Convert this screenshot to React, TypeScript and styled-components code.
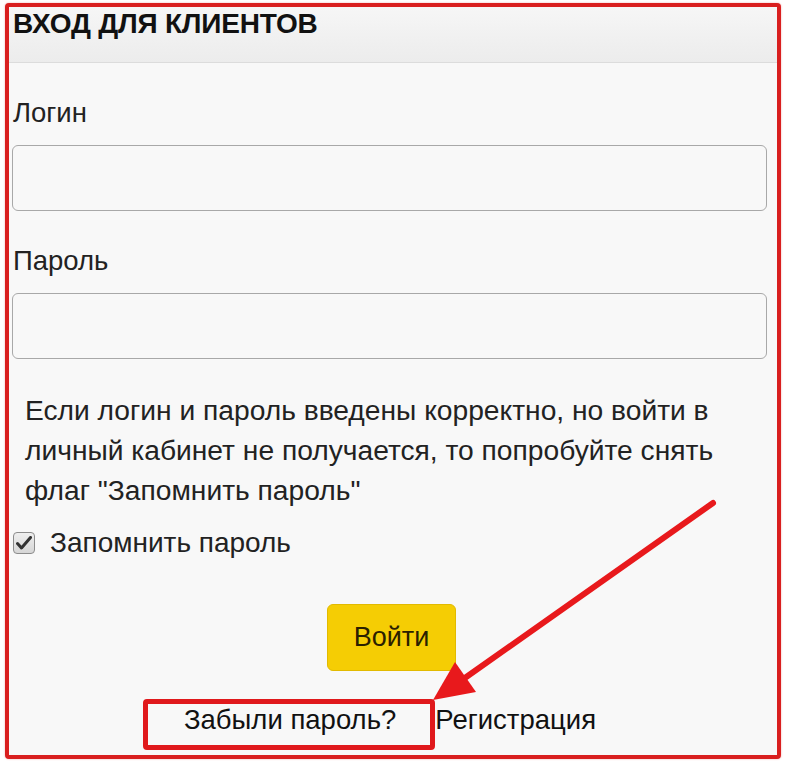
import React from "react";
import styled, { createGlobalStyle } from "styled-components";

const GlobalStyle = createGlobalStyle`
  html, body {
    margin: 0;
    padding: 0;
    background: #ffffff;
  }
  body {
    font-family: "Liberation Sans", Arial, sans-serif;
    color: #222;
  }
  * { box-sizing: border-box; }
`;

const Page = styled.div`
  position: relative;
  width: 786px;
  height: 764px;
  padding: 3px 0 0 5px;
`;

const Frame = styled.div`
  width: 776px;
  height: 756px;
  border: 4px solid #d91f1f;
  border-radius: 4px;
  background: #f8f8f8;
  box-shadow: 0 0 2px rgba(217, 31, 31, 0.4);
  overflow: hidden;
`;

const Header = styled.div`
  height: 56px;
  padding: 1px 0 0 4px;
  background: linear-gradient(#f6f6f6, #ececec);
  border-bottom: 1px solid #dcdcdc;
`;

const Title = styled.h2`
  margin: 0;
  font-size: 28px;
  line-height: 31px;
  font-weight: 700;
  color: #111;
  letter-spacing: -0.2px;
`;

const Body = styled.div`
  display: flex;
  flex-direction: column;
  padding: 0 10px 0 3px;
`;

const Label = styled.label`
  display: block;
  margin-top: 35px;
  padding-left: 1px;
  font-size: 27.5px;
  line-height: 30px;
  color: #222;
`;

const Input = styled.input`
  display: block;
  width: 100%;
  height: 66px;
  margin-top: 17px;
  border: 1px solid #a8a8a8;
  border-radius: 6px;
  background: #f8f8f8;
  font-family: inherit;
  font-size: 24px;
  padding: 0 12px;
  outline: none;
`;

const Note = styled.p`
  margin: 31px 0 0 0;
  padding-left: 13px;
  font-size: 28.2px;
  line-height: 40px;
  color: #222;
`;

const CheckRow = styled.div`
  display: flex;
  align-items: center;
  gap: 15px;
  margin-top: 18px;
  height: 30px;
  padding-left: 1px;
  font-size: 28px;
  line-height: 30px;
  color: #222;
`;

const Box = styled.span`
  display: inline-flex;
  align-items: center;
  justify-content: center;
  width: 22px;
  height: 22px;
  border: 1px solid #8c8c8c;
  border-radius: 4px;
  background: linear-gradient(#efefef, #d6d6d6);
`;

const ButtonRow = styled.div`
  display: flex;
  justify-content: center;
  margin-top: 46px;
  padding-left: 4px;
`;

const Button = styled.button`
  width: 129px;
  height: 67px;
  border: 1px solid #e2ba00;
  border-radius: 6px;
  background: #f5cd04;
  font-family: inherit;
  font-size: 27px;
  color: #2a2000;
  cursor: pointer;
`;

const Links = styled.div`
  display: flex;
  justify-content: center;
  gap: 39px;
  margin-top: 34px;
  padding-left: 1px;
  font-size: 27.5px;
  line-height: 30px;
`;

const Link = styled.a<{ $marked?: boolean }>`
  position: relative;
  color: #111;
  text-decoration: none;
  ${(p) =>
    p.$marked &&
    `
    &::before {
      content: "";
      position: absolute;
      left: -41px;
      right: -39px;
      top: -6px;
      bottom: -15px;
      border: 5px solid #e0191c;
      border-radius: 4px;
    }
  `}
`;

const Arrow = styled.svg`
  position: absolute;
  left: 0;
  top: 0;
  pointer-events: none;
`;

export default function App() {
  return (
    <>
      <GlobalStyle />
      <Page>
        <Frame>
          <Header>
            <Title>ВХОД ДЛЯ КЛИЕНТОВ</Title>
          </Header>
          <Body>
            <Label>Логин</Label>
            <Input type="text" />
            <Label>Пароль</Label>
            <Input type="password" />
            <Note>
              Если логин и пароль введены корректно, но войти в
              <br />
              личный кабинет не получается, то попробуйте снять
              <br />
              флаг "Запомнить пароль"
            </Note>
            <CheckRow>
              <Box>
                <svg width="16" height="14" viewBox="0 0 16 14">
                  <path
                    d="M1.5 7.5 L5.5 12 L14.5 1.5"
                    fill="none"
                    stroke="#333"
                    strokeWidth="3"
                    strokeLinecap="round"
                    strokeLinejoin="round"
                  />
                </svg>
              </Box>
              <span>Запомнить пароль</span>
            </CheckRow>
            <ButtonRow>
              <Button>Войти</Button>
            </ButtonRow>
            <Links>
              <Link $marked href="#">Забыли пароль?</Link>
              <Link href="#">Регистрация</Link>
            </Links>
          </Body>
        </Frame>
        <Arrow width="786" height="764" viewBox="0 0 786 764">
          <line
            x1="713"
            y1="503"
            x2="462"
            y2="680"
            stroke="#e8191c"
            strokeWidth="6"
            strokeLinecap="round"
          />
          <polygon points="433,700 455,662 476,692" fill="#e8191c" />
        </Arrow>
      </Page>
    </>
  );
}
